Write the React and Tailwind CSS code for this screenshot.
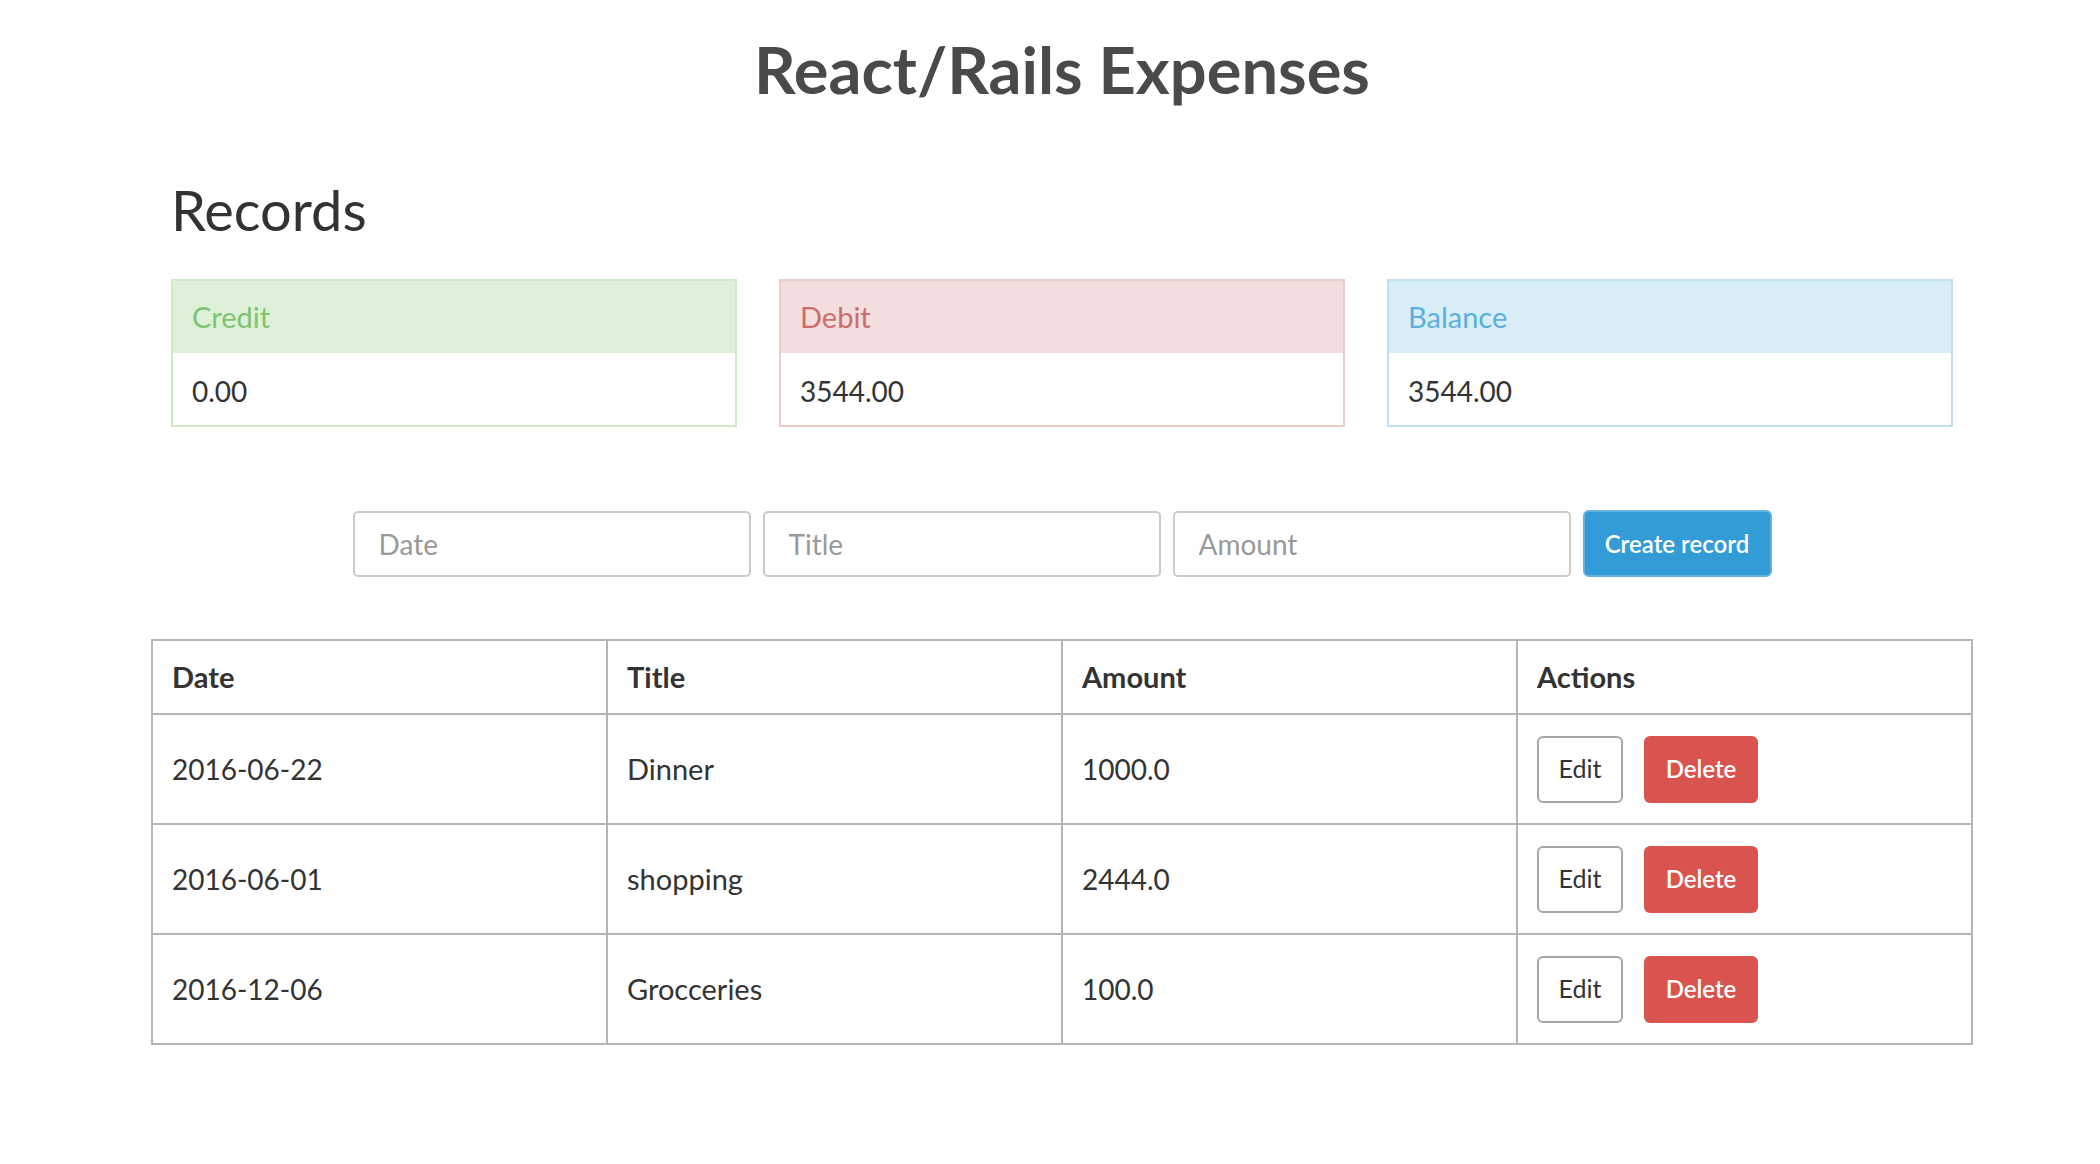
import React from 'react';

const records = [
  { id: 1, date: '2016-06-22', title: 'Dinner', amount: '1000.0' },
  { id: 2, date: '2016-06-01', title: 'shopping', amount: '2444.0' },
  { id: 3, date: '2016-12-06', title: 'Grocceries', amount: '100.0' },
];

const AmountBox = ({ label, value, box, head, text }) => (
  <div className={`border-2 ${box}`}>
    <div className={`h-[72px] flex items-center pl-[19px] text-[29px] ${head} ${text}`}>{label}</div>
    <div className="h-[72px] flex items-center pl-[19px] pt-[4px] text-[28px] text-[#333]">{value}</div>
  </div>
);

const App = () => {
  return (
    <div className="min-h-screen bg-white font-[Lato,sans-serif] text-[#333]">
      <div className="ml-[151px] w-[1822px]">
        <h1 className="pt-[37px] text-center text-[65px] leading-none font-bold text-[#4a4a4a]">
          React/Rails Expenses
        </h1>

        <div className="px-[20px]">
          <h2 className="mt-[80px] text-[56px] leading-none font-normal text-[#333]">Records</h2>

          {/* Amount boxes */}
          <div className="mt-[41px] grid grid-cols-3 gap-[42px]">
            <AmountBox label="Credit" value="0.00" box="border-[#d0e9c6]" head="bg-[#dff0d8]" text="text-[#7cc471]" />
            <AmountBox label="Debit" value="3544.00" box="border-[#ebcccc]" head="bg-[#f2dede]" text="text-[#cf6b6b]" />
            <AmountBox label="Balance" value="3544.00" box="border-[#bfe1f2]" head="bg-[#d9edf7]" text="text-[#5aafdc]" />
          </div>
        </div>

        {/* New record form */}
        <form className="mt-[83px] flex justify-center items-center gap-[12px]">
          <input
            type="text"
            placeholder="Date"
            className="w-[398px] h-[66px] border-2 border-[#cccccc] rounded-[5px] px-[24px] text-[28px] text-[#555] placeholder:text-[#999] outline-none"
          />
          <input
            type="text"
            placeholder="Title"
            className="w-[398px] h-[66px] border-2 border-[#cccccc] rounded-[5px] px-[24px] text-[28px] text-[#555] placeholder:text-[#999] outline-none"
          />
          <input
            type="text"
            placeholder="Amount"
            className="w-[398px] h-[66px] border-2 border-[#cccccc] rounded-[5px] px-[24px] text-[28px] text-[#555] placeholder:text-[#999] outline-none"
          />
          <button
            type="button"
            className="w-[189px] h-[67px] rounded-[6px] border-2 border-[#62b1e0] bg-[#339cd6] text-white text-[24px] font-semibold"
          >
            Create record
          </button>
        </form>

        {/* Records table */}
        <table className="mt-[62px] w-full table-fixed border-collapse border-2 border-[#b5b5b5] text-[28px]">
          <thead>
            <tr className="h-[74px] text-[29px]">
              <th className="border-2 border-[#b5b5b5] px-[19px] text-left font-bold">Date</th>
              <th className="border-2 border-[#b5b5b5] px-[19px] text-left font-bold">Title</th>
              <th className="border-2 border-[#b5b5b5] px-[19px] text-left font-bold">Amount</th>
              <th className="border-2 border-[#b5b5b5] px-[19px] text-left font-bold">Actions</th>
            </tr>
          </thead>
          <tbody>
            {records.map((record) => (
              <tr key={record.id} className="h-[110px]">
                <td className="border-2 border-[#b5b5b5] px-[19px]">{record.date}</td>
                <td className="border-2 border-[#b5b5b5] px-[19px] text-[29px]">{record.title}</td>
                <td className="border-2 border-[#b5b5b5] px-[19px]">{record.amount}</td>
                <td className="border-2 border-[#b5b5b5] px-[19px]">
                  <div className="flex items-center gap-[21px]">
                    <button
                      type="button"
                      className="w-[86px] h-[67px] rounded-[6px] border-2 border-[#a6a6a6] bg-white text-[25px] text-[#333]"
                    >
                      Edit
                    </button>
                    <button
                      type="button"
                      className="w-[114px] h-[67px] rounded-[6px] bg-[#d9534f] text-[24px] font-semibold text-white"
                    >
                      Delete
                    </button>
                  </div>
                </td>
              </tr>
            ))}
          </tbody>
        </table>
      </div>
    </div>
  );
};

export default App;
